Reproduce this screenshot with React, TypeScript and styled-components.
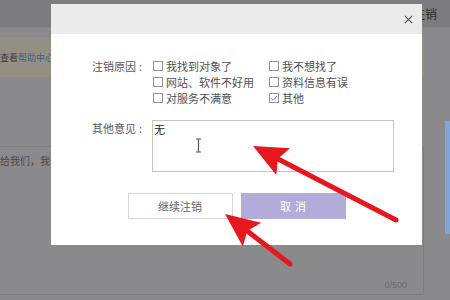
import React from 'react';
import styled, { createGlobalStyle } from 'styled-components';

const GlobalStyle = createGlobalStyle`
  html, body {
    margin: 0;
    padding: 0;
    background: #8a898b;
  }
  * {
    box-sizing: border-box;
  }
`;

const Screen = styled.div`
  position: relative;
  width: 450px;
  height: 300px;
  overflow: hidden;
  background: #8a898b;
  font-family: 'Noto Sans CJK SC', 'Noto Sans', sans-serif;
`;

/* page behind the modal mask */
const TopBar = styled.div`
  height: 28px;
  background: #7d7c7e;
  border-bottom: 1px solid #858486;
  display: flex;
  justify-content: flex-end;
  align-items: center;
  padding-right: 13px;
  font-size: 12px;
  color: #2e2d30;
`;

const Content = styled.div`
  display: flex;
`;

const Main = styled.div`
  width: 424px;
  padding-top: 9px;
`;

const Notice = styled.div`
  height: 40px;
  background: #939083;
  display: flex;
  align-items: center;
  font-size: 9px;
  color: #3d3c3c;
  white-space: nowrap;
`;

const NoticeLink = styled.span`
  color: #3c5f8e;
`;

const Panel = styled.div`
  margin-top: 69px;
  height: 149px;
  border-top: 1px solid #7e7d80;
  border-right: 1px solid #7e7d80;
  border-bottom: 1px solid #7e7d80;
  display: flex;
  flex-direction: column;
  justify-content: space-between;
  padding: 6px 16px 4px 0;
`;

const PanelText = styled.div`
  font-size: 10px;
  color: #4a494b;
  white-space: nowrap;
`;

const Counter = styled.div`
  align-self: flex-end;
  font-family: 'Liberation Sans', Arial, sans-serif;
  font-size: 9px;
  color: #6c6b6d;
`;

const Side = styled.div`
  flex: 1;
  display: flex;
  justify-content: flex-end;
  padding-top: 93px;
`;

const BlueBar = styled.div`
  width: 5px;
  height: 113px;
  background: #7fa5d9;
`;

/* modal */
const Dialog = styled.div`
  position: absolute;
  left: 51px;
  top: 4px;
  width: 371px;
  height: 241px;
  background: #fff;
  display: flex;
  flex-direction: column;
`;

const Header = styled.div`
  height: 30px;
  background: #ebebeb;
  display: flex;
  justify-content: flex-end;
  align-items: center;
  padding-right: 9px;
`;

const CloseIcon = styled.svg`
  width: 9px;
  height: 9px;
  margin-top: 1px;
`;

const Body = styled.div`
  padding: 24px 0 0 36px;
  display: flex;
  flex-direction: column;
`;

const FieldRow = styled.div<{ $gap?: number }>`
  display: flex;
  align-items: flex-start;
  gap: 9px;
  margin-top: ${p => p.$gap ?? 0}px;
`;

const Label = styled.div`
  width: 56px;
  display: flex;
  justify-content: flex-end;
  font-size: 11px;
  line-height: 16px;
  color: #5a5a5a;
  white-space: nowrap;
`;

const Colon = styled.span`
  padding: 0 1px 0 3px;
`;

const Options = styled.div`
  display: grid;
  grid-template-columns: 116px auto;
  grid-auto-rows: 16px;
`;

const Option = styled.label`
  display: flex;
  align-items: center;
  gap: 3px;
  font-size: 11px;
  color: #505050;
  white-space: nowrap;
`;

const Box = styled.span`
  width: 10px;
  height: 10px;
  margin-left: 1px;
  border: 1px solid #949494;
  background: #fff;
  display: flex;
  align-items: center;
  justify-content: center;
`;

const TextBox = styled.div`
  position: relative;
  width: 242px;
  height: 52px;
  border: 1px solid #c4c4c4;
  padding: 1px 1px;
  font-size: 11px;
  line-height: 14px;
  color: #222;
`;

const Caret = styled.svg`
  position: absolute;
  left: 42px;
  top: 17px;
  width: 7px;
  height: 15px;
`;

const Buttons = styled.div`
  display: flex;
  justify-content: center;
  gap: 8px;
  margin-top: 21px;
  padding-right: 36px;
`;

const Button = styled.button<{ $primary?: boolean }>`
  width: 105px;
  height: 26px;
  border: 1px solid ${p => (p.$primary ? '#b3abda' : '#d6d6d6')};
  background: ${p => (p.$primary ? '#b3abda' : '#fff')};
  color: ${p => (p.$primary ? '#fff' : '#666')};
  font-family: 'Noto Sans CJK SC', sans-serif;
  font-size: 11px;
  padding: 0;
  letter-spacing: ${p => (p.$primary ? '4px' : '0')};
  text-indent: ${p => (p.$primary ? '4px' : '0')};
`;

const Arrows = styled.svg`
  position: absolute;
  left: 0;
  top: 0;
  width: 450px;
  height: 300px;
  pointer-events: none;
`;

const reasons: [string, boolean][] = [
  ['我找到对象了', false],
  ['我不想找了', false],
  ['网站、软件不好用', false],
  ['资料信息有误', false],
  ['对服务不满意', false],
  ['其他', true],
];

const Arrow = ({ x1, y1, x2, y2 }: { x1: number; y1: number; x2: number; y2: number }) => {
  const dx = x2 - x1;
  const dy = y2 - y1;
  const len = Math.hypot(dx, dy);
  const ux = dx / len;
  const uy = dy / len;
  const headLen = 34;
  const headW = 15;
  const bx = x2 - ux * headLen;
  const by = y2 - uy * headLen;
  const px = -uy;
  const py = ux;
  const head = `${x2},${y2} ${bx + px * headW},${by + py * headW} ${bx + ux * 6},${by + uy * 6} ${bx - px * headW},${by - py * headW}`;
  return (
    <g>
      <line x1={x1} y1={y1} x2={bx + ux * 8} y2={by + uy * 8} stroke="#e8171d" strokeWidth={5} strokeLinecap="round" />
      <polygon points={head} fill="#e8171d" />
    </g>
  );
};

export default function App() {
  return (
    <>
      <GlobalStyle />
      <Screen>
        <TopBar>注销</TopBar>
        <Content>
          <Main>
            <Notice>
              查看<NoticeLink>帮助中心</NoticeLink>
            </Notice>
            <Panel>
              <PanelText>给我们，我们</PanelText>
              <Counter>0/500</Counter>
            </Panel>
          </Main>
          <Side>
            <BlueBar />
          </Side>
        </Content>

        <Dialog>
          <Header>
            <CloseIcon viewBox="0 0 10 10">
              <path d="M1 1L9 9M9 1L1 9" stroke="#555" strokeWidth="1.3" />
            </CloseIcon>
          </Header>
          <Body>
            <FieldRow>
              <Label>
                注销原因<Colon>:</Colon>
              </Label>
              <Options>
                {reasons.map(([text, checked]) => (
                  <Option key={text}>
                    <Box>
                      {checked && (
                        <svg width="8" height="8" viewBox="0 0 8 8">
                          <path d="M1 4.2L3.2 6.3L7 1.8" stroke="#888" strokeWidth="1" fill="none" />
                        </svg>
                      )}
                    </Box>
                    {text}
                  </Option>
                ))}
              </Options>
            </FieldRow>
            <FieldRow $gap={14}>
              <Label>
                其他意见<Colon>:</Colon>
              </Label>
              <TextBox>
                无
                <Caret viewBox="0 0 7 15">
                  <path d="M1 1H6M3.5 1V14M1 14H6" stroke="#555" strokeWidth="1.2" fill="none" />
                </Caret>
              </TextBox>
            </FieldRow>
            <Buttons>
              <Button>继续注销</Button>
              <Button $primary>取消</Button>
            </Buttons>
          </Body>
        </Dialog>

        <Arrows viewBox="0 0 450 300">
          <Arrow x1={396} y1={220} x2={253} y2={146} />
          <Arrow x1={290} y1={264} x2={225} y2={214} />
        </Arrows>
      </Screen>
    </>
  );
}
